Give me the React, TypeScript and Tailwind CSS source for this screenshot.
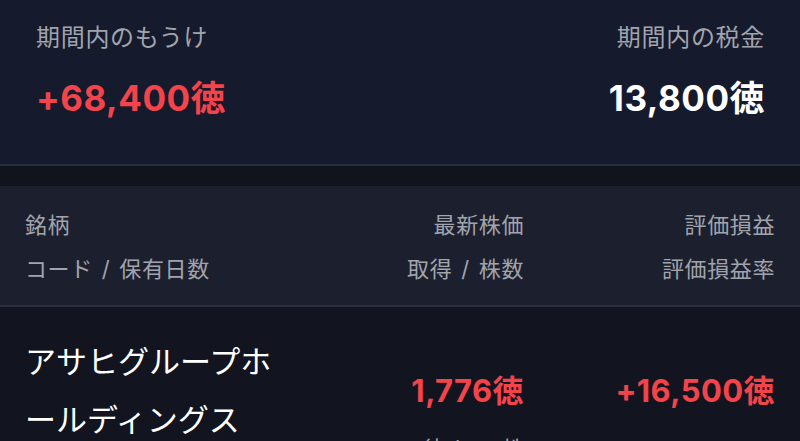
const jp = "font-['Inter','Noto_Sans_CJK_JP',sans-serif]";

function Summary() {
  return (
    <section className="flex h-[164px] justify-between bg-[#151a2c] pl-[36px] pr-[35px] pt-[20px]">
      <div className="flex flex-col">
        <span className="text-[24px] leading-[36px] tracking-[0.7px] text-[#a1a4ad]">期間内のもうけ</span>
        <span className="mt-[22px] text-[35px] font-bold leading-[40px] tracking-[0.5px] text-[#f2444a]">+68,400徳</span>
      </div>
      <div className="flex flex-col items-end">
        <span className="text-[24px] leading-[36px] tracking-[0.7px] text-[#a1a4ad]">期間内の税金</span>
        <span className="mt-[22px] text-[35px] font-bold leading-[40px] tracking-[0.5px] text-white">13,800徳</span>
      </div>
    </section>
  );
}

function Pair({ a, b }: { a: string; b: string }) {
  return (
    <span>
      {a}
      <span className="mx-[9px]">/</span>
      {b}
    </span>
  );
}

function TableHeader() {
  return (
    <div className="grid h-[121px] grid-cols-[1fr_200px_251px] border-b-2 border-[#2a2e3d] bg-[#1c202e] pl-[25px] pr-[25px] pt-[17px] text-[22px] leading-[44px] tracking-[0.6px] text-[#a1a4ad]">
      <div className="flex flex-col">
        <span>銘柄</span>
        <Pair a="コード" b="保有日数" />
      </div>
      <div className="flex flex-col items-end">
        <span>最新株価</span>
        <Pair a="取得" b="株数" />
      </div>
      <div className="flex flex-col items-end">
        <span>評価損益</span>
        <span>評価損益率</span>
      </div>
    </div>
  );
}

function Row() {
  return (
    <div className="grid grid-cols-[1fr_200px_251px] pl-[25px] pr-[25px] pt-[26px]">
      <div className="w-[262px] text-[31px] leading-[58px] text-white">アサヒグループホールディングス</div>
      <div className="flex flex-col items-end pt-[36px]">
        <span className="text-[31px] font-bold leading-[44px] tracking-[0.4px] text-[#f2444a]">1,776徳</span>
        <span className="mt-[21px] text-[22px] leading-[30px] text-[#a1a4ad]">1,611徳 / 100株</span>
      </div>
      <div className="flex flex-col items-end pt-[36px]">
        <span className="text-[31px] font-bold leading-[44px] tracking-[0.4px] text-[#f2444a]">+16,500徳</span>
      </div>
    </div>
  );
}

export default function App() {
  return (
    <main className={`h-[441px] w-[800px] overflow-hidden bg-[#12151f] ${jp}`}>
      <Summary />
      <div className="h-[22px] border-t-2 border-[#2a2e40] bg-[#11141d]" />
      <TableHeader />
      <Row />
    </main>
  );
}
